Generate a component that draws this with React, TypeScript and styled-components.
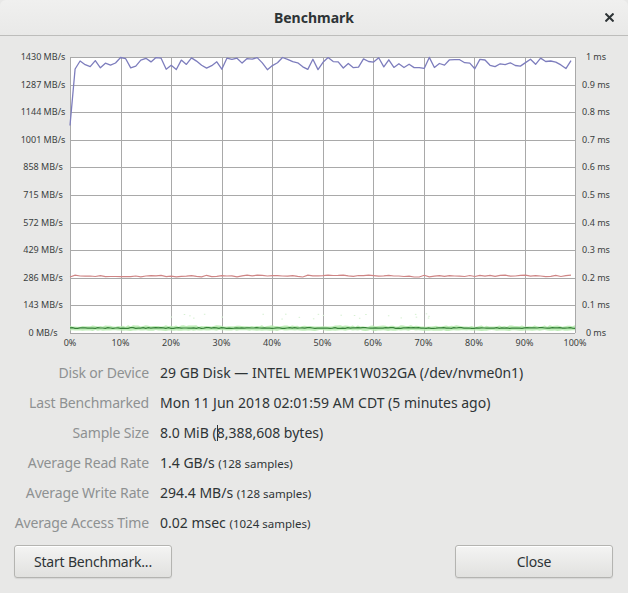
import styled, { createGlobalStyle } from 'styled-components'

const GlobalStyle = createGlobalStyle`
  html, body {
    margin: 0;
    padding: 0;
    background: #e8e8e7;
  }
  body {
    font-family: "Noto Sans", "DejaVu Sans", sans-serif;
    color: #2e3436;
  }
`

const Window = styled.div`
  width: 628px;
  height: 593px;
  display: flex;
  flex-direction: column;
  background: #e8e8e7;
  overflow: hidden;
`

const TitleBar = styled.div`
  height: 35px;
  flex: none;
  display: grid;
  grid-template-columns: 1fr auto 1fr;
  align-items: center;
  background: linear-gradient(#f0f0ef, #e9e9e8);
  border-bottom: 1px solid #bdbdbb;
  border-radius: 6px 6px 0 0;
`

const Title = styled.div`
  grid-column: 2;
  font-size: 14px;
  font-weight: bold;
  color: #2e3436;
`

const CloseIcon = styled.div`
  justify-self: end;
  width: 22px;
  height: 22px;
  margin-right: 8px;
  display: flex;
  align-items: center;
  justify-content: center;
`

const Chart = styled.svg`
  display: block;
  flex: none;
  width: 628px;
  height: 318px;
`

const InfoGrid = styled.div`
  display: grid;
  grid-template-columns: 149px 1fr;
  column-gap: 11px;
  grid-auto-rows: 30px;
  margin-top: 3px;
  align-items: center;
  font-size: 14px;
`

const Label = styled.div`
  text-align: right;
  color: #8e9192;
  white-space: nowrap;
  letter-spacing: -0.15px;
`

const Value = styled.div`
  color: #2e3436;
  white-space: nowrap;
`

const Small = styled.span`
  font-size: 11.5px;
`

const Caret = styled.span`
  display: inline-block;
  width: 1px;
  height: 16px;
  margin-right: -1px;
  background: #2e3436;
  vertical-align: -3px;
`

const ButtonRow = styled.div`
  display: flex;
  justify-content: space-between;
  padding: 0 15px 0 14px;
  margin-top: 8px;
`

const Button = styled.button`
  width: 158px;
  height: 33px;
  font-family: inherit;
  font-size: 14px;
  letter-spacing: -0.2px;
  color: #2e3436;
  background: linear-gradient(#f4f4f3, #e1e1df);
  border: 1px solid #b4b4b1;
  border-radius: 3px;
  box-shadow: inset 0 1px #fff, 0 1px 1px rgba(0, 0, 0, 0.08);
`

// plot geometry in page coordinates
const PX0 = 70
const PX1 = 575
const PY0 = 57
const PY1 = 333
const TOP = 36

function mulberry32(a: number) {
  return () => {
    a |= 0
    a = (a + 0x6d2b79f5) | 0
    let t = Math.imul(a ^ (a >>> 15), 1 | a)
    t = (t + Math.imul(t ^ (t >>> 7), 61 | t)) ^ t
    return ((t ^ (t >>> 14)) >>> 0) / 4294967296
  }
}

const leftLabels = ['1430', '1287', '1144', '1001', '858', '715', '572', '429', '286', '143', '0']
const rightLabels = ['1', '0.9', '0.8', '0.7', '0.6', '0.5', '0.4', '0.3', '0.2', '0.1', '0']

const buildSeries = () => {
  const rnd = mulberry32(7)
  const n = 100
  const step = (PX1 - PX0 - 4) / (n - 1)
  const mbY = (v: number) => PY1 - (v / 1430) * (PY1 - PY0)
  const read: string[] = []
  const write: string[] = []
  for (let i = 0; i < n; i++) {
    const x = (PX0 + i * step).toFixed(1)
    let r = i === 0 ? 1075 : 1390 + (rnd() - 0.4) * 65
    if (r > 1428) r = 1428 - rnd() * 4
    read.push(`${x},${mbY(r).toFixed(1)}`)
    const w = 295 + (rnd() - 0.5) * 10
    write.push(`${x},${mbY(w).toFixed(1)}`)
  }
  const access: string[] = []
  const band: string[] = []
  for (let i = 0; i <= 200; i++) {
    const x = (PX0 + (i * (PX1 - PX0)) / 200).toFixed(1)
    access.push(`${x},${(328 + (rnd() - 0.5) * 0.8).toFixed(1)}`)
    band.push(`${x},${(326 + (rnd() - 0.5) * 1.6).toFixed(1)}`)
  }
  const bandBottom: string[] = []
  for (let i = 200; i >= 0; i--) {
    const x = (PX0 + (i * (PX1 - PX0)) / 200).toFixed(1)
    bandBottom.push(`${x},${(330.5 + (rnd() - 0.5) * 0.8).toFixed(1)}`)
  }
  const dots: { x: number; y: number }[] = []
  for (let i = 0; i < 24; i++) {
    dots.push({ x: 170 + rnd() * 260, y: 313 + rnd() * 6 })
  }
  return {
    read: read.join(' '),
    write: write.join(' '),
    access: access.join(' '),
    band: `M${band.join(' L')} L${bandBottom.join(' L')} Z`,
    dots,
  }
}

const series = buildSeries()

const BenchmarkChart = () => {
  const rowH = (PY1 - PY0) / 10
  const colW = (PX1 - PX0) / 10
  return (
    <Chart viewBox={`0 ${TOP} 628 318`}>
      <rect x={PX0} y={PY0} width={PX1 - PX0} height={PY1 - PY0} fill="#ffffff" />
      {leftLabels.map((_, i) => {
        const y = Math.round(PY0 + i * rowH) + 0.5
        return <line key={`h${i}`} x1={PX0} x2={PX1} y1={y} y2={y} stroke="#a9a9a9" strokeWidth={1} />
      })}
      {Array.from({ length: 11 }).map((_, i) => {
        const x = Math.round(PX0 + i * colW) + 0.5
        return <line key={`v${i}`} x1={x} x2={x} y1={PY0} y2={PY1} stroke="#a9a9a9" strokeWidth={1} />
      })}
      <path d={series.band} fill="#b4eaab" opacity={0.85} />
      {series.dots.map((d, i) => (
        <rect key={`d${i}`} x={d.x} y={d.y} width={1.5} height={1} fill="#d6f0d2" />
      ))}
      <polyline points={series.access} fill="none" stroke="#357f37" strokeWidth={1.2} />
      <polyline points={series.write} fill="none" stroke="#cf8585" strokeWidth={1.2} />
      <polyline points={series.read} fill="none" stroke="#7d7dbd" strokeWidth={1.3} strokeLinejoin="round" />
      <g fontFamily="'Noto Sans', 'DejaVu Sans', sans-serif" fontSize={9} fill="#3b3f40">
        {leftLabels.map((l, i) => (
          <text key={`l${i}`} x={43} y={PY0 + i * rowH + 3} textAnchor="middle">
            {l} MB/s
          </text>
        ))}
        {rightLabels.map((l, i) => (
          <text key={`r${i}`} x={596} y={PY0 + i * rowH + 3} textAnchor="middle">
            {l} ms
          </text>
        ))}
        {Array.from({ length: 11 }).map((_, i) => (
          <text key={`x${i}`} x={PX0 + i * colW} y={346} textAnchor="middle">
            {i * 10}%
          </text>
        ))}
      </g>
    </Chart>
  )
}

const App = () => {
  return (
    <Window>
      <GlobalStyle />
      <TitleBar>
        <Title>Benchmark</Title>
        <CloseIcon>
          <svg width="9" height="9" viewBox="0 0 9 9">
            <path d="M1.2 1.2 L7.8 7.8 M7.8 1.2 L1.2 7.8" stroke="#2e3436" strokeWidth="2" strokeLinecap="square" />
          </svg>
        </CloseIcon>
      </TitleBar>
      <BenchmarkChart />
      <InfoGrid>
        <Label>Disk or Device</Label>
        <Value>29 GB Disk — INTEL MEMPEK1W032GA (/dev/nvme0n1)</Value>
        <Label>Last Benchmarked</Label>
        <Value>Mon 11 Jun 2018 02:01:59 AM CDT (5 minutes ago)</Value>
        <Label>Sample Size</Label>
        <Value>
          8.0 MiB (<Caret />8,388,608 bytes)
        </Value>
        <Label>Average Read Rate</Label>
        <Value>
          1.4 GB/s <Small>(128 samples)</Small>
        </Value>
        <Label>Average Write Rate</Label>
        <Value>
          294.4 MB/s <Small>(128 samples)</Small>
        </Value>
        <Label>Average Access Time</Label>
        <Value>
          0.02 msec <Small>(1024 samples)</Small>
        </Value>
      </InfoGrid>
      <ButtonRow>
        <Button>Start Benchmark...</Button>
        <Button>Close</Button>
      </ButtonRow>
    </Window>
  )
}

export default App
